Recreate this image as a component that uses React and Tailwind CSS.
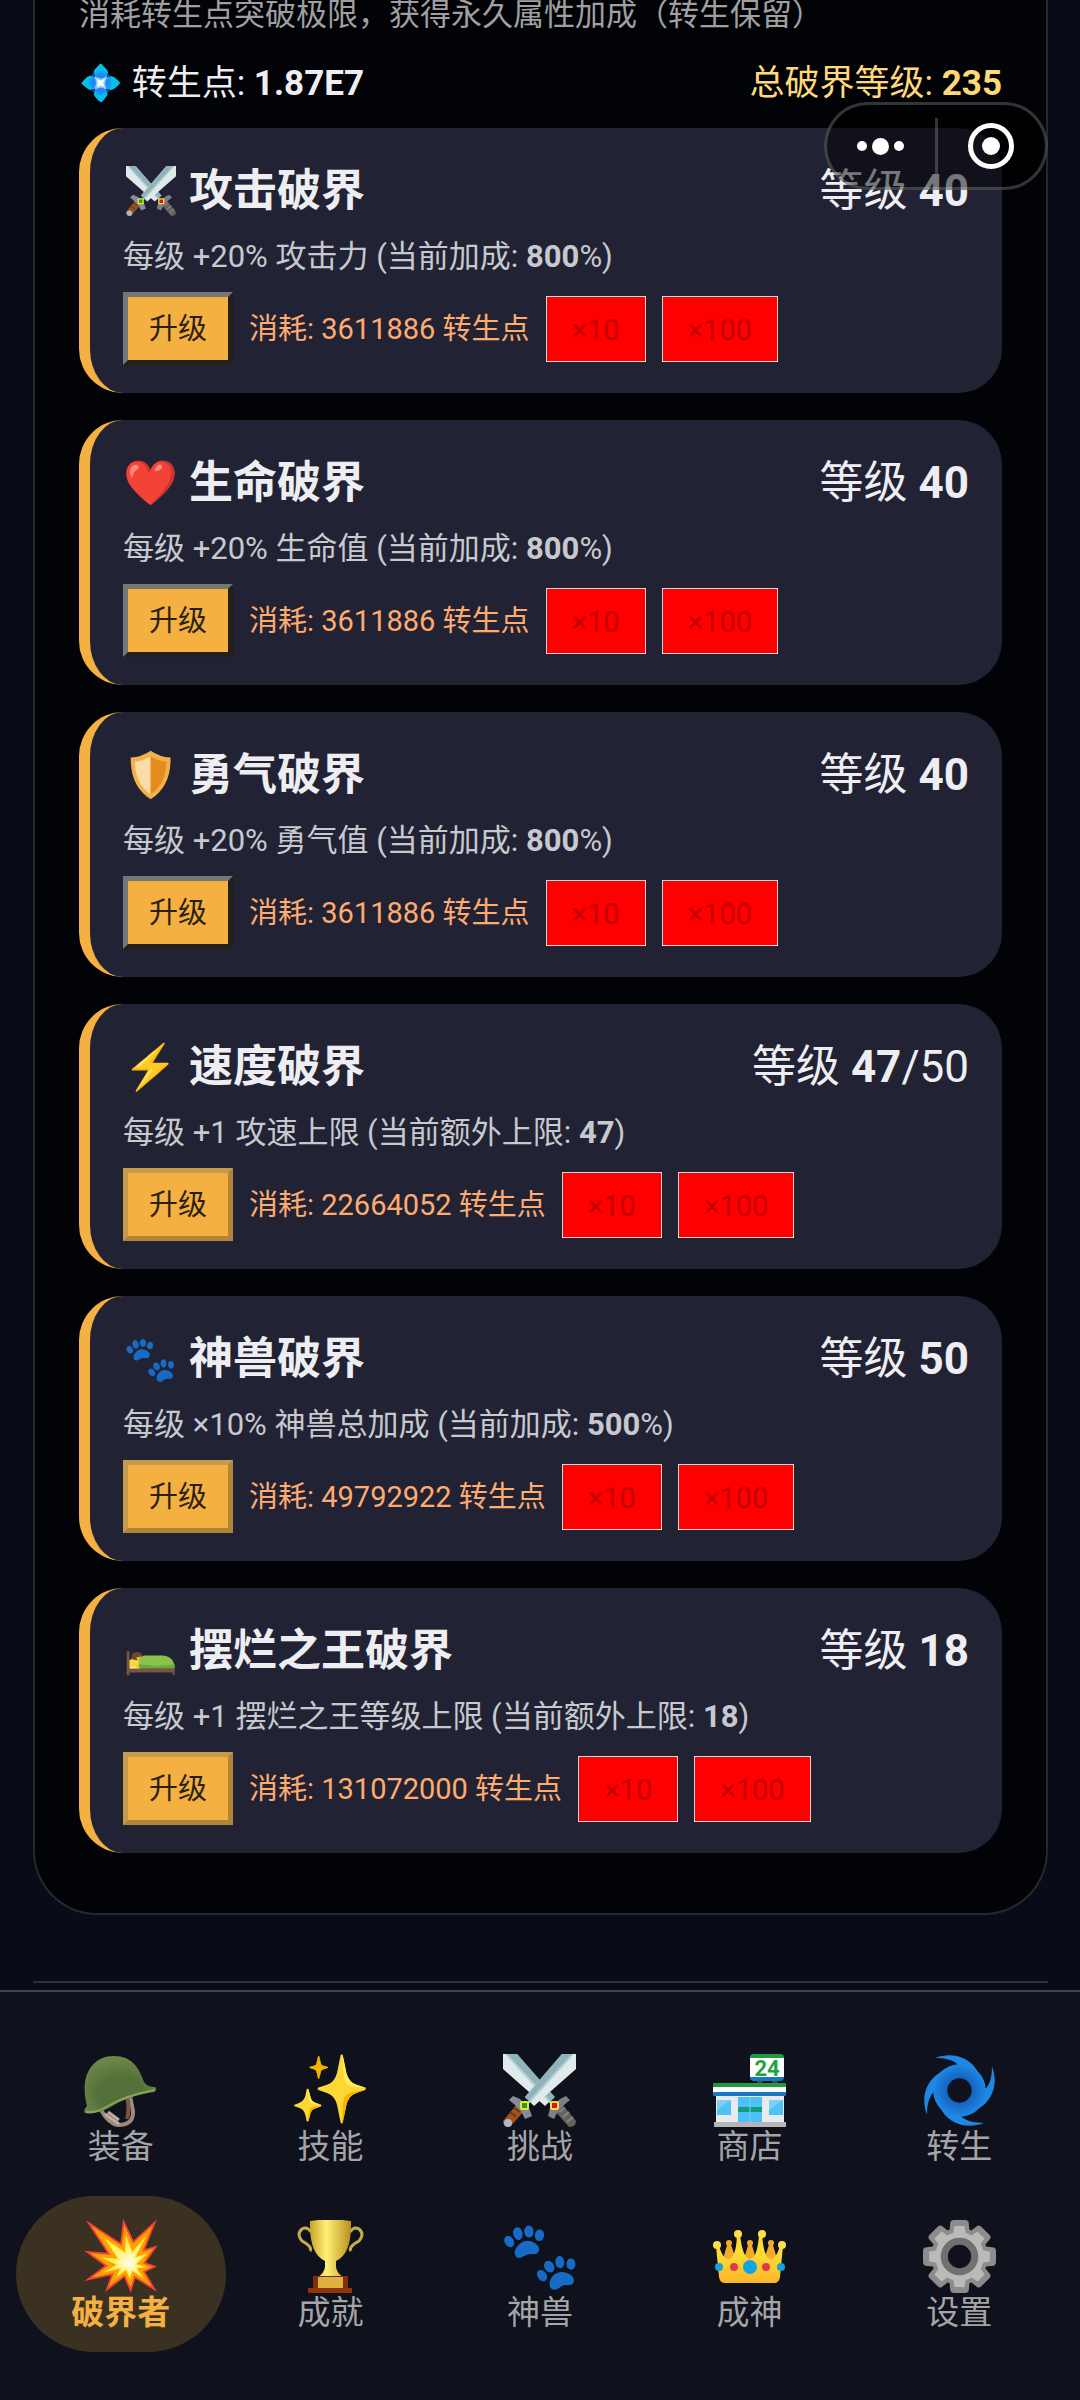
import React, { useState } from 'react';

const SwordsIcon = ({ className }) => (
  <svg viewBox="0 0 73 73" className={className} aria-hidden="true">
    <path d="M0 0h14l37 43-9 9L0 15z" fill="#dfeaeb" />
    <path d="M3 0h11l38 43-5 5z" fill="#8fb3ba" />
    <path d="M5 2l43 47" stroke="#b4cdd1" strokeWidth="2" />
    <path d="M51 56l8-6 14 17q0 6-7 6z" fill="#67625f" />
    <path d="M56 58l6-4M60 63l6-5M64 68l6-5" stroke="#8a8480" strokeWidth="2" />
    <path d="M63 42l4 4-6 5-6 6-4 8-6-3 2-8 10-9z" fill="#7a7f88" />
    <path d="M73 0H59L22 43l9 9 42-37z" fill="#dfeaeb" />
    <path d="M70 0H59L22 43l5 5z" fill="#8fb3ba" />
    <path d="M68 2L25 49" stroke="#b4cdd1" strokeWidth="2" />
    <path d="M22 56l-8-6L0 67q0 6 7 6z" fill="#9c5420" />
    <path d="M17 58l-6-4M13 63l-6-5" stroke="#6d3915" strokeWidth="2" />
    <circle cx="5" cy="69" r="4" fill="#aeb9c4" />
    <path d="M10 42l-4 4 6 5 6 6 4 8 7-3-3-8-9-9z" fill="#858c9b" />
    <rect x="17" y="47" width="9" height="9" rx="2" fill="#d4ee35" />
    <rect x="19" y="49" width="5" height="5" fill="#3f9413" />
    <rect x="47" y="47" width="9" height="9" rx="2" fill="#ffd84a" />
    <rect x="49" y="49" width="5" height="5" fill="#d01a12" />
  </svg>
);

const ShieldIcon = ({ className }) => (
  <svg viewBox="0 0 73 73" className={className} aria-hidden="true">
    <path d="M36 1Q23 10 7 11Q6 53 36 72Q66 53 65 11Q49 10 36 1z" fill="#f3b14c" />
    <path d="M36 9Q25 16 13 17Q13 49 36 65z" fill="#fcdca6" />
    <path d="M36 9Q47 16 59 17Q59 49 36 65z" fill="#e58c1f" />
  </svg>
);

const BedIcon = ({ className }) => (
  <svg viewBox="0 0 73 73" className={className} aria-hidden="true">
    <rect x="5" y="50" width="18" height="13" fill="#fff3b0" />
    <path d="M5 50l7-4 4 6-1 8H5z" fill="#fdd835" />
    <path d="M14 44q8-4 9 3v14h-9l3-9z" fill="#fbc02d" />
    <path d="M8 48q-1-10 8-10 7 0 8 6l-9 2-1 4z" fill="#6d4534" />
    <path d="M19 62V52q0-8 8-9h27q17 2 17 19z" fill="#8bc34a" />
    <path d="M19 62v-6q30 4 52 0v6z" fill="#6faa38" />
    <path d="M1 37h4v25h66v10h-3v-4H5v4H1z" fill="#795548" />
  </svg>
);

const HelmetIcon = ({ className }) => (
  <svg viewBox="0 0 73 73" className={className} aria-hidden="true">
    <defs>
      <radialGradient id="dome" cx=".5" cy=".65" r=".75">
        <stop offset=".4" stopColor="#54713a" />
        <stop offset="1" stopColor="#75914f" />
      </radialGradient>
    </defs>
    <path d="M17 56Q25 70 34 71Q50 71 49 57L46 42" fill="none" stroke="#a1887f" strokeWidth="4" />
    <path d="M43 43q3 12 0 22" fill="none" stroke="#795548" strokeWidth="4" />
    <path d="M21 60l14 10M24 58l11 8" stroke="#c0aaa2" strokeWidth="3" />
    <path d="M3 52C-5 22 8 2 30 2C48 2 55 14 60 28Q63 33 71 33Q74 35 70 38C50 41 38 46 25 54Q12 61 1 59Q-1 56 3 52z" fill="url(#dome)" />
    <path d="M2 58Q13 59 24 52Q43 41 71 36" fill="none" stroke="#8aa55b" strokeWidth="2" />
  </svg>
);

const ShopIcon = ({ className }) => (
  <svg viewBox="0 0 73 73" className={className} aria-hidden="true">
    <path d="M44 26h6v4h-6zM59 26h6v4h-6z" fill="#37474f" />
    <rect x="37" width="34" height="27" rx="4" fill="#1c77c3" />
    <path d="M37 4q0-4 4-4h26q4 0 4 4v1H37z" fill="#1f9a3c" />
    <rect x="37" y="4" width="34" height="19" fill="#fff" />
    <text x="54" y="22" textAnchor="middle" fontSize="22" fontWeight="700" fontFamily="Roboto, sans-serif" fill="#1fa33c">24</text>
    <rect x="3" y="42" width="68" height="27" fill="#e8eaed" />
    <rect y="29" width="73" height="4" rx="1" fill="#1f9a3c" />
    <rect y="33" width="73" height="6" fill="#fff" />
    <rect y="38" width="73" height="4" rx="1" fill="#1c77c3" />
    <path d="M4 46h14v15H4zM56 46h14v15H56z" fill="#4fc3f7" />
    <path d="M4 46h14L4 56zM56 46h14L56 56z" fill="#7dcff5" />
    <rect x="25" y="43" width="24" height="26" fill="#4cc0f8" />
    <rect x="25" y="53" width="24" height="5" fill="#129e7c" />
    <path d="M37 43v26" stroke="#7dd3fa" />
    <rect x="1" y="68" width="72" height="5" fill="#b5b5b5" />
  </svg>
);

const CycloneIcon = ({ className }) => (
  <svg viewBox="0 0 72 72" className={className} aria-hidden="true">
    <defs>
      <radialGradient id="eye" cx=".5" cy=".5" r=".5">
        <stop offset=".5" stopColor="#1565c0" />
        <stop offset="1" stopColor="#1e88e5" />
      </radialGradient>
      <mask id="hole">
        <rect width="72" height="72" fill="#fff" />
        <circle cx="36" cy="36" r="12" fill="#000" />
      </mask>
    </defs>
    <g fill="#1e88e5" mask="url(#hole)">
      <path d="M12 4C32-4 58 5 60 39L36 40 34 10C28 5 20 4 12 4z" />
      <path d="M12 4C32-4 58 5 60 39L36 40 34 10C28 5 20 4 12 4z" transform="rotate(90 36 36)" />
      <path d="M12 4C32-4 58 5 60 39L36 40 34 10C28 5 20 4 12 4z" transform="rotate(180 36 36)" />
      <path d="M12 4C32-4 58 5 60 39L36 40 34 10C28 5 20 4 12 4z" transform="rotate(270 36 36)" />
      <circle cx="36" cy="36" r="26" fill="url(#eye)" />
    </g>
  </svg>
);

const TrophyIcon = ({ className }) => (
  <svg viewBox="0 0 73 73" className={className} aria-hidden="true">
    <defs>
      <linearGradient id="gold" x1="0" x2="1">
        <stop offset="0" stopColor="#c9a227" />
        <stop offset=".4" stopColor="#fff176" />
        <stop offset="1" stopColor="#b98f1e" />
      </linearGradient>
    </defs>
    <path d="M17 12Q13 6 8 9Q2 14 8 21Q19 27 16 31M56 12Q60 6 65 9Q71 14 65 21Q54 27 57 31" fill="none" stroke="#c5ac4b" strokeWidth="3" />
    <path d="M16 1q20-3 41 0Q58 34 42 41v6q1 6 7 10H24q6-4 7-10v-6Q15 34 16 1z" fill="url(#gold)" />
    <rect x="19" y="56" width="35" height="13" fill="#7f2d0c" />
    <rect x="24" y="57" width="25" height="11" fill="#dcb13c" />
    <rect x="14" y="68" width="44" height="5" fill="#8f3409" />
  </svg>
);

const CrownIcon = ({ className }) => (
  <svg viewBox="0 0 73 73" className={className} aria-hidden="true">
    <defs>
      <linearGradient id="crown" x2="0" y2="1">
        <stop offset=".4" stopColor="#fddc33" />
        <stop offset="1" stopColor="#fbb62a" />
      </linearGradient>
    </defs>
    <g fill="#f5ab2a">
      <path d="M9 42l6-20h2l7 20zM30 42l6-20h2l6 20zM50 42l7-20h2l6 20z" />
      <circle cx="16" cy="23" r="3" />
      <circle cx="37" cy="23" r="3" />
      <circle cx="58" cy="23" r="3" />
    </g>
    <path d="M3 26h3q4 13 9 13 8 0 9-24h3q3 24 10 24t9-24h3q2 24 9 24 5 0 9-13h3l-3 31q-1 6-6 6H12q-5 0-6-6z" fill="url(#crown)" />
    <g fill="#fde047">
      <circle cx="4" cy="25" r="4" />
      <circle cx="25" cy="14" r="4" />
      <circle cx="49" cy="14" r="4" />
      <circle cx="69" cy="25" r="4" />
    </g>
    <circle cx="6" cy="47" r="4" fill="#12a4dc" />
    <circle cx="68" cy="47" r="4" fill="#12a4dc" />
    <circle cx="21" cy="47" r="4" fill="#dc3a50" />
    <circle cx="53" cy="47" r="4" fill="#dc3a50" />
    <circle cx="37" cy="47" r="7" fill="#12a4e4" />
  </svg>
);

const GearIcon = ({ className }) => (
  <svg viewBox="0 0 72 72" className={className} aria-hidden="true">
    <defs>
      <path id="tooth" d="M26 12l1-10q1-2 3-2h12q2 0 3 2l1 10z" />
      <path id="tooth-face" d="M29 18l2-12h10l2 12z" />
    </defs>
    <g fill="#8c8c8c">
      {[0, 45, 90, 135, 180, 225, 270, 315].map((angle) => (
        <use key={angle} href="#tooth" transform={`rotate(${angle} 36 36)`} />
      ))}
    </g>
    <circle cx="36" cy="36" r="21" fill="none" stroke="#8c8c8c" strokeWidth="14" />
    <g fill="#bababa">
      {[0, 45, 90, 135, 180, 225, 270, 315].map((angle) => (
        <use key={angle} href="#tooth-face" transform={`rotate(${angle} 36 36)`} />
      ))}
    </g>
    <circle cx="36" cy="36" r="20" fill="none" stroke="#bababa" strokeWidth="8" />
    <circle cx="36" cy="36" r="15" fill="none" stroke="#707070" strokeWidth="7" />
  </svg>
);

const upgrades = [
  { Icon: SwordsIcon, name: '攻击破界', level: 40, desc: '每级 +20% 攻击力 (当前加成: ', value: '800', tail: '%)', cost: '3611886', ready: false },
  { emoji: '❤️', name: '生命破界', level: 40, desc: '每级 +20% 生命值 (当前加成: ', value: '800', tail: '%)', cost: '3611886', ready: false },
  { Icon: ShieldIcon, name: '勇气破界', level: 40, desc: '每级 +20% 勇气值 (当前加成: ', value: '800', tail: '%)', cost: '3611886', ready: false },
  { emoji: '⚡', name: '速度破界', level: 47, max: 50, desc: '每级 +1 攻速上限 (当前额外上限: ', value: '47', tail: ')', cost: '22664052', ready: true },
  { emoji: '🐾', name: '神兽破界', level: 50, desc: '每级 ×10% 神兽总加成 (当前加成: ', value: '500', tail: '%)', cost: '49792922', ready: true },
  { Icon: BedIcon, name: '摆烂之王破界', level: 18, desc: '每级 +1 摆烂之王等级上限 (当前额外上限: ', value: '18', tail: ')', cost: '131072000', ready: true },
];

const tabs = [
  { Icon: HelmetIcon, label: '装备' },
  { emoji: '✨', label: '技能' },
  { Icon: SwordsIcon, label: '挑战' },
  { Icon: ShopIcon, label: '商店' },
  { Icon: CycloneIcon, label: '转生' },
  { emoji: '💥', label: '破界者' },
  { Icon: TrophyIcon, label: '成就' },
  { emoji: '🐾', label: '神兽' },
  { Icon: CrownIcon, label: '成神' },
  { Icon: GearIcon, label: '设置' },
];

const App = () => {
  const [active, setActive] = useState('破界者');

  return (
    <div className="relative flex min-h-screen flex-col bg-[#090c18] font-['Roboto','Noto_Sans_CJK_SC',sans-serif] text-[#eeeef2]">
      <main className="grow pr-8 pb-[7px] pl-[33px]">
        <section className="rounded-b-[64px] border-2 border-t-0 border-[#26282c] bg-[#020306] px-11 pb-[60px]">
          <p className="text-[31px] leading-[30px] text-[#a0a0a2]">消耗转生点突破极限，获得永久属性加成（转生保留）</p>
          <div className="mt-6 flex items-center justify-between text-[35px] leading-[60px]">
            <div>💠 转生点: <b>1.87E7</b></div>
            <div className="text-[#ffd977]">总破界等级: <b>235</b></div>
          </div>
          <div className="mt-[14px] flex flex-col gap-[27px]">
            {upgrades.map((item) => (
              <UpgradeCard key={item.name} item={item} />
            ))}
          </div>
        </section>
        <hr className="mt-[66px] border-t-2 border-[#2e3036]" />
      </main>

      <nav className="grid grid-cols-5 gap-y-[10px] border-t-2 border-[#42444f] bg-[#0f111c] px-4 pt-[38px] pb-12">
        {tabs.map(({ Icon, emoji, label }) => (
          <button
            key={label}
            onClick={() => setActive(label)}
            className={`flex flex-col items-center rounded-full pt-6 pb-[18px] ${active === label ? 'bg-[#3b3123] font-bold text-[#f4b041]' : 'text-[#a5a5a8]'}`}
          >
            <span className="flex h-[72px] items-center text-[66px] leading-[72px]">
              {Icon ? <Icon className="size-[73px]" /> : emoji}
            </span>
            <span className="text-[33px] leading-[42px]">{label}</span>
          </button>
        ))}
      </nav>

      <Capsule />
    </div>
  );
};

const UpgradeCard = ({ item }) => {
  const { Icon, emoji, name, level, max, desc, value, tail, cost, ready } = item;

  return (
    <article className="rounded-[44px] border-l-[11px] border-[#f4b041] bg-[#212334] px-[33px] py-7">
      <div className="flex items-center justify-between text-[44px] leading-[70px]">
        <h3 className="flex items-center gap-[11px] font-bold">
          <span className="flex w-[55px] justify-center">
            {Icon ? <Icon className="size-[50px]" /> : emoji}
          </span>
          {name}
        </h3>
        <div>等级 <b>{level}</b>{max && `/${max}`}</div>
      </div>
      <p className="mt-2 text-[31px] leading-[46px] text-[#c8c9cf]">
        {desc}<b>{value}</b>{tail}
      </p>
      <div className="mt-3 flex items-center gap-4 text-[29px] leading-[61px]">
        <button
          className={`border-[5px] bg-[#f4b041] px-[21px] pt-0.5 text-[#2a1f10] ${ready ? 'border-t-[#c49a4c] border-r-[#b08538] border-b-[#b08538] border-l-[#c49a4c]' : 'border-t-[#767676] border-r-[#222018] border-b-[#222018] border-l-[#767676]'}`}
        >
          升级
        </button>
        <span className="pt-0.5 text-[#ffab70]">消耗: {cost} 转生点</span>
        <BulkButton label="×10" />
        <BulkButton label="×100" />
      </div>
    </article>
  );
};

const BulkButton = ({ label }) => (
  <button disabled className="border border-[#ffd0d0] bg-[#ff0000] px-[25px] pt-0.5 leading-[62px] text-[#c40202]">
    {label}
  </button>
);

// Host app menu that floats over the page
const Capsule = () => (
  <div className="absolute top-[102px] right-8 flex h-[88px] w-56 items-center rounded-full border-[3px] border-white/20 bg-black/50">
    <button aria-label="更多" className="flex h-full flex-1 items-center justify-center gap-[5px]">
      <span className="size-[10px] rounded-full bg-white" />
      <span className="size-[17px] rounded-full bg-white" />
      <span className="size-[10px] rounded-full bg-white" />
    </button>
    <span className="h-14 w-[3px] bg-white/20" />
    <button aria-label="关闭" className="flex h-full flex-1 items-center justify-center">
      <span className="flex size-[46px] items-center justify-center rounded-full border-[5px] border-white">
        <span className="size-[18px] rounded-full bg-white" />
      </span>
    </button>
  </div>
);

export default App;
